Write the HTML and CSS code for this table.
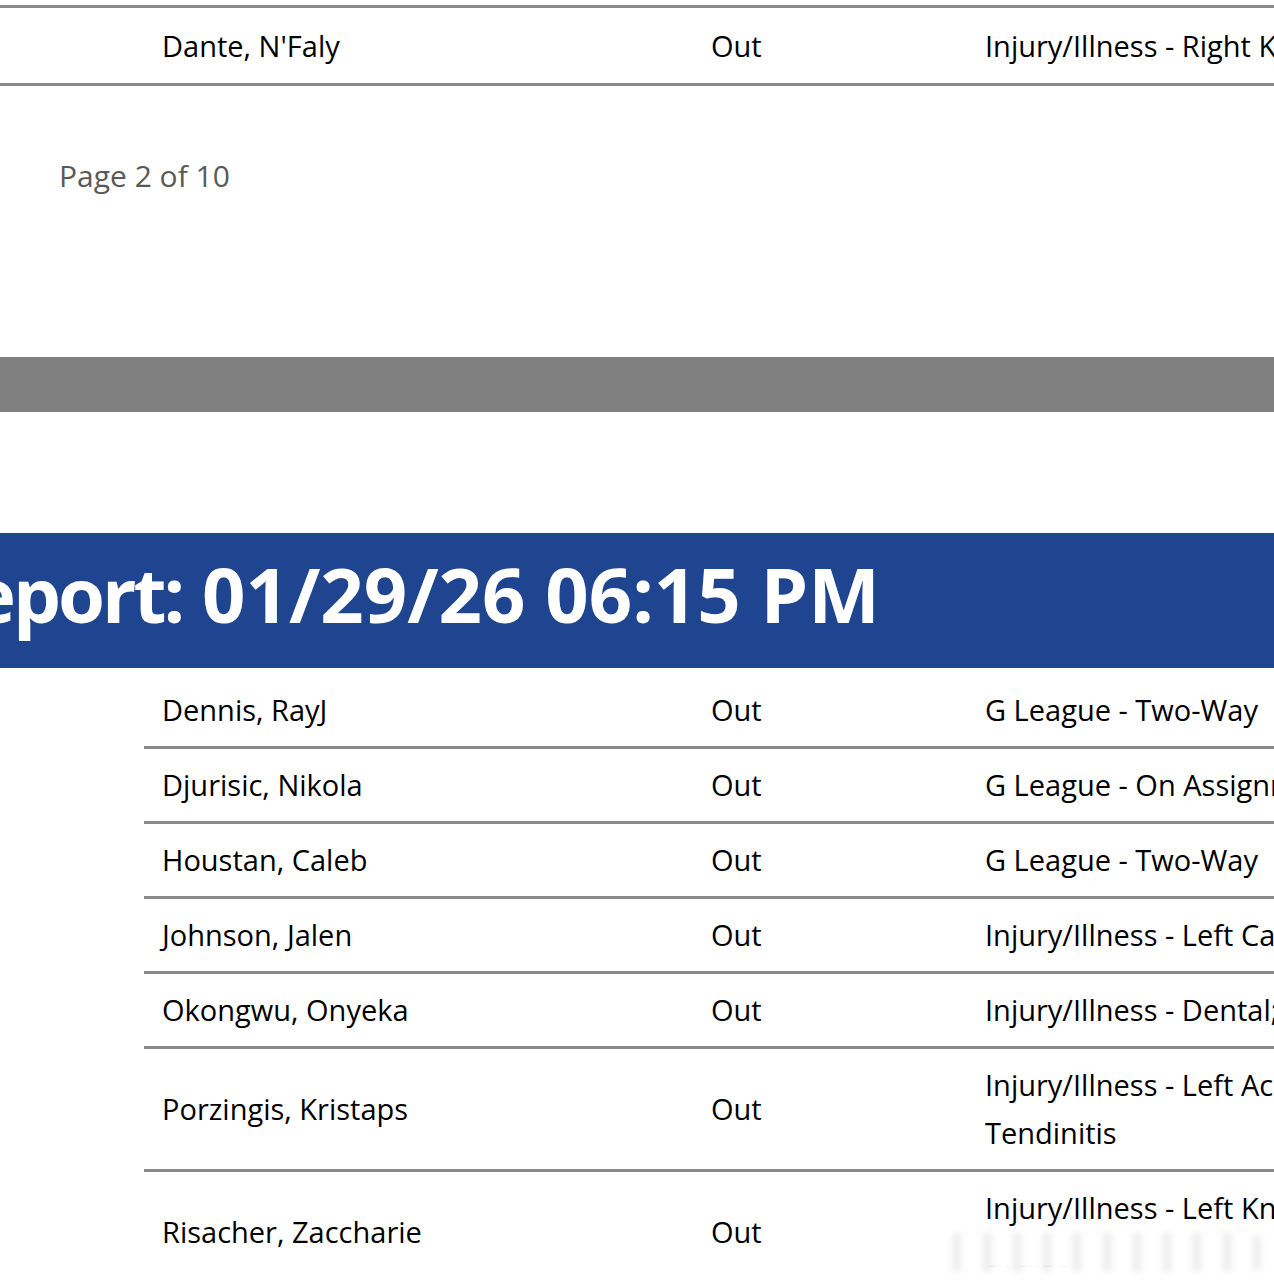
FILE: index.html
```html
<!DOCTYPE html>
<html lang="en">
<head>
<meta charset="utf-8">
<title>Injury Report</title>
<link rel="stylesheet" href="styles.css">
</head>
<body>
<div class="page">
  <section class="prev-table">
    <div class="row row-top">
      <div class="cell lead"></div>
      <div class="cell name">Dante, N'Faly</div>
      <div class="cell status">Out</div>
      <div class="cell reason">Injury/Illness - Right Knee; Sprain</div>
    </div>
  </section>

  <div class="page-num">Page 2 of 10</div>

  <div class="page-break"></div>

  <header class="banner">
    <h1 class="banner-title"><span class="lead-word">eport:</span> 01/29/26 06:15 PM</h1>
  </header>

  <section class="report">
    <div class="team-col"></div>
    <div class="rows">
      <div class="row">
        <div class="cell name">Dennis, RayJ</div>
        <div class="cell status">Out</div>
        <div class="cell reason">G League - Two-Way</div>
      </div>
      <div class="row">
        <div class="cell name">Djurisic, Nikola</div>
        <div class="cell status">Out</div>
        <div class="cell reason">G League - On Assignment</div>
      </div>
      <div class="row">
        <div class="cell name">Houstan, Caleb</div>
        <div class="cell status">Out</div>
        <div class="cell reason">G League - Two-Way</div>
      </div>
      <div class="row">
        <div class="cell name">Johnson, Jalen</div>
        <div class="cell status">Out</div>
        <div class="cell reason">Injury/Illness - Left Calf; Strain</div>
      </div>
      <div class="row">
        <div class="cell name">Okongwu, Onyeka</div>
        <div class="cell status">Out</div>
        <div class="cell reason">Injury/Illness - Dental; Fracture</div>
      </div>
      <div class="row">
        <div class="cell name">Porzingis, Kristaps</div>
        <div class="cell status">Out</div>
        <div class="cell reason">Injury/Illness - Left Achilles<br>Tendinitis</div>
      </div>
      <div class="row">
        <div class="cell name">Risacher, Zaccharie</div>
        <div class="cell status">Out</div>
        <div class="cell reason">Injury/Illness - Left Knee; Bone<br>Bruise</div>
      </div>
    </div>
  </section>

  <div class="watermark" aria-hidden="true"></div>
</div>
</body>
</html>
```

FILE: styles.css
```css
html, body {
  margin: 0;
  padding: 0;
  background: #ffffff;
}

body {
  width: 1274px;
  height: 1286px;
  overflow: hidden;
  font-family: "Open Sans", "Noto Sans", "Liberation Sans", sans-serif;
  color: #000000;
}

.page {
  position: relative;
  width: 1274px;
  height: 1286px;
  overflow: hidden;
}

.row {
  display: grid;
  grid-template-columns: 549px 274px 1fr;
  align-items: center;
  padding: 12px 0;
  border-bottom: 3px solid #8a8a8a;
}

.cell {
  padding: 0 18px;
  font-size: 29px;
  line-height: 48px;
  white-space: nowrap;
  overflow: hidden;
}

.prev-table {
  margin-top: 5px;
  border-top: 3px solid #8a8a8a;
}

.row-top {
  grid-template-columns: 144px 549px 274px 1fr;
  padding: 14px 0 13px;
}

.lead {
  padding: 0;
}

.page-num {
  margin-top: 70px;
  padding-left: 59px;
  font-size: 30px;
  line-height: 40px;
  color: #595959;
}

.page-break {
  margin-top: 161px;
  height: 55px;
  background: #808080;
}

.banner {
  margin-top: 121px;
  height: 135px;
  background: #1f4590;
  box-sizing: border-box;
  padding-bottom: 14px;
  overflow: hidden;
}

.banner-title {
  margin: 0;
  font-size: 76px;
  font-weight: 700;
  line-height: 121px;
  color: #ffffff;
  white-space: nowrap;
  text-indent: -29px;
}

.lead-word {
  letter-spacing: -3px;
}

.report {
  display: flex;
  margin-top: 6px;
}

.team-col {
  flex: 0 0 144px;
}

.rows {
  flex: 1;
  min-width: 0;
}

.watermark {
  position: absolute;
  left: 943px;
  top: 1233px;
  width: 322px;
  height: 39px;
  background:
    repeating-linear-gradient(90deg, rgba(225,225,225,0) 0 10px, rgba(225,225,225,0.6) 10px 18px, rgba(225,225,225,0) 18px 30px),
    #ffffff;
  filter: blur(3px);
  border-radius: 16px;
}
```
